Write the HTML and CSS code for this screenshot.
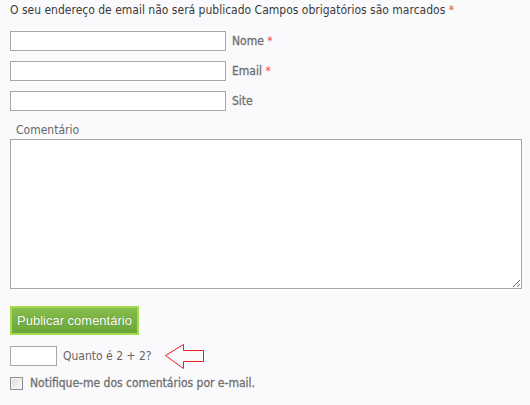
FILE: index.html
```html
<!DOCTYPE html>
<html lang="pt">
<head>
<meta charset="utf-8">
<link rel="stylesheet" href="styles.css">
</head>
<body>
<form class="comment-form">
  <p class="notice">O seu endereço de email não será publicado Campos obrigatórios são marcados <span class="req">*</span></p>
  <div class="field-row">
    <input class="text-input" type="text">
    <label class="field-label">Nome <span class="req">*</span></label>
  </div>
  <div class="field-row">
    <input class="text-input" type="text">
    <label class="field-label">Email <span class="req">*</span></label>
  </div>
  <div class="field-row">
    <input class="text-input" type="text">
    <label class="field-label">Site</label>
  </div>
  <label class="comment-label">Comentário</label>
  <textarea class="comment-box"></textarea>
  <div class="submit-row">
    <button class="submit-btn" type="button">Publicar comentário</button>
  </div>
  <div class="captcha-row">
    <input class="captcha-input" type="text">
    <span class="captcha-label">Quanto é 2 + 2?</span>
    <svg class="arrow" width="41" height="26" viewBox="0 0 41 26">
      <polygon points="1.5,12.5 19.5,1.5 19.5,7.5 39.5,7.5 39.5,18.5 19.5,18.5 19.5,25.5" fill="none" stroke="#ee1c24" stroke-width="1"/>
    </svg>
  </div>
  <div class="notify-row">
    <span class="checkbox"></span>
    <span class="notify-label">Notifique-me dos comentários por e-mail.</span>
  </div>
</form>
</body>
</html>
```
FILE: styles.css
```css
html, body {
  margin: 0;
  padding: 0;
  background: #fafafc;
}
body {
  font-family: "DejaVu Sans Condensed", "DejaVu Sans", sans-serif;
  font-size: 12px;
  color: #3a3a3a;
}
.comment-form {
  display: flex;
  flex-direction: column;
  padding: 2px 8px 0 10px;
}
.notice {
  margin: 0 0 13px 0;
  line-height: 16px;
  color: #3a3a3a;
}
.req {
  color: #ff4b2b;
  -webkit-text-stroke: 0;
}
.field-row {
  display: flex;
  align-items: center;
  gap: 6px;
  margin-bottom: 10px;
}
.text-input {
  box-sizing: border-box;
  width: 216px;
  height: 20px;
  margin: 0;
  border: 1px solid #a8a8a8;
  background: #fff;
  padding: 0;
}
.field-label {
  color: #707070;
  -webkit-text-stroke: 0.3px #707070;
}
.comment-label {
  margin: 1px 0 0 6px;
  line-height: 16px;
  color: #666;
}
.comment-box {
  box-sizing: border-box;
  width: 512px;
  height: 150px;
  margin: 1px 0 0 0;
  border: 1px solid #a8a8a8;
  background: #fff;
  resize: both;
  padding: 0;
}
.submit-row {
  display: flex;
  margin-top: 17px;
}
.submit-btn {
  box-sizing: border-box;
  height: 29px;
  padding: 0 5px;
  border: 2px solid #a3dc4e;
  background: linear-gradient(#86bd4b, #6ca53a);
  color: #fff;
  font-family: "Liberation Sans", Arial, sans-serif;
  font-size: 13px;
  text-shadow: 0 0 1px #4c7a22;
}
.captcha-row {
  display: flex;
  align-items: center;
  margin-top: 8px;
}
.captcha-input {
  box-sizing: border-box;
  width: 47px;
  height: 20px;
  margin: 0;
  border: 1px solid #a8a8a8;
  background: #fff;
  padding: 0;
}
.captcha-label {
  margin-left: 6px;
  color: #666;
}
.arrow {
  display: block;
  margin-left: 12px;
}
.notify-row {
  display: flex;
  align-items: center;
  margin-top: 7px;
}
.checkbox {
  box-sizing: border-box;
  width: 13px;
  height: 13px;
  border: 1px solid #8e8f8f;
  background: linear-gradient(135deg, #dcdcdc, #fbfbfb);
  box-shadow: inset 0 0 0 1px #f4f4f4;
}
.notify-label {
  margin-left: 7px;
  color: #707070;
  -webkit-text-stroke: 0.3px #707070;
}
```
